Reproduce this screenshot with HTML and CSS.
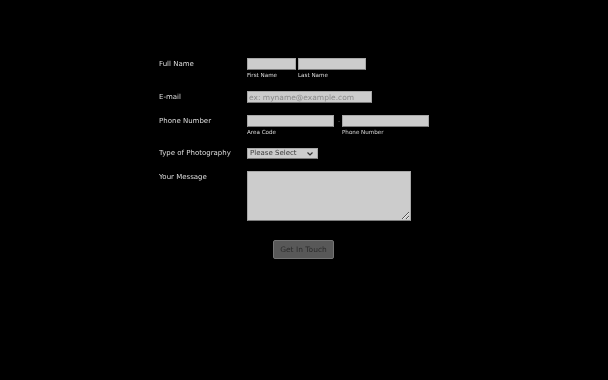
FILE: index.html
```html
<!DOCTYPE html>
<html>
<head>
<meta charset="utf-8">
<link rel="stylesheet" href="styles.css">
</head>
<body>
<form class="form">
  <div class="row">
    <label class="label">Full Name</label>
    <div class="field">
      <div class="group">
        <input class="input w-first" type="text">
        <span class="sub">First Name</span>
      </div>
      <div class="group">
        <input class="input w-last" type="text">
        <span class="sub">Last Name</span>
      </div>
    </div>
  </div>
  <div class="row">
    <label class="label">E-mail</label>
    <div class="field">
      <input class="input w-email" type="text" placeholder="ex: myname@example.com">
    </div>
  </div>
  <div class="row">
    <label class="label">Phone Number</label>
    <div class="field">
      <div class="group">
        <input class="input w-area" type="text">
        <span class="sub">Area Code</span>
      </div>
      <span class="dash">-</span>
      <div class="group">
        <input class="input w-phone" type="text">
        <span class="sub">Phone Number</span>
      </div>
    </div>
  </div>
  <div class="row row-tight">
    <label class="label label-tight">Type of Photography</label>
    <div class="field">
      <div class="select">
        <span class="select-text">Please Select</span>
        <svg class="chev" width="6" height="4" viewBox="0 0 6 4"><path d="M0.5 0.5 L3 3 L5.5 0.5" fill="none" stroke="#333" stroke-width="1.2"/></svg>
      </div>
    </div>
  </div>
  <div class="row">
    <label class="label">Your Message</label>
    <div class="field">
      <textarea class="textarea"></textarea>
    </div>
  </div>
  <div class="actions">
    <button class="button" type="button">Get In Touch</button>
  </div>
</form>
</body>
</html>
```
FILE: styles.css
```css
html, body {
  margin: 0;
  padding: 0;
  background: #000;
}
body {
  width: 608px;
  height: 380px;
  overflow: hidden;
  font-family: "DejaVu Sans", Verdana, sans-serif;
}
.form {
  padding: 58px 0 0 159px;
  filter: grayscale(1);
}
.row {
  display: flex;
  align-items: flex-start;
  margin-bottom: 12px;
}
.label {
  width: 88px;
  height: 12px;
  flex: none;
  color: #dedede;
  font-size: 7px;
  line-height: 12px;
  white-space: nowrap;
}
.label-tight {
  height: 11px;
  line-height: 11px;
}
.field {
  display: flex;
  align-items: flex-start;
}
.group {
  display: flex;
  flex-direction: column;
  margin-right: 2px;
}
.input {
  box-sizing: border-box;
  height: 12px;
  margin: 0;
  padding: 0 1px;
  background: #cccccc;
  border: 1px solid #a8a8a8;
  border-bottom-color: #7a7a7a;
  border-radius: 0;
  font-family: "DejaVu Sans", Verdana, sans-serif;
  font-size: 7.5px;
  color: #333;
  outline: none;
  flex: none;
}
.input::placeholder {
  color: #8a8a8a;
}
.w-first { width: 49px; }
.w-last { width: 68px; }
.w-email { width: 125px; }
.w-area { width: 87px; }
.w-phone { width: 87px; }
.sub {
  display: block;
  height: 9px;
  color: #dedede;
  font-size: 5.6px;
  line-height: 11px;
  white-space: nowrap;
  overflow: visible;
}
.dash {
  color: #666;
  font-size: 6px;
  line-height: 12px;
  height: 12px;
  width: 6px;
  text-align: center;
}
.select {
  position: relative;
  box-sizing: border-box;
  width: 71px;
  height: 11px;
  background: #cccccc;
  border: 1px solid #a8a8a8;
  border-bottom-color: #7a7a7a;
  display: flex;
  align-items: center;
  padding-left: 2px;
}
.select-text {
  font-size: 7px;
  color: #3a3a3a;
  line-height: 9px;
}
.chev {
  position: absolute;
  right: 4px;
  top: 3px;
}
.textarea {
  box-sizing: border-box;
  width: 164px;
  height: 50px;
  margin: 0;
  padding: 1px;
  background: #cccccc;
  border: 1px solid #a8a8a8;
  border-bottom-color: #7a7a7a;
  border-radius: 0;
  outline: none;
  display: block;
  resize: both;
}
.actions {
  display: flex;
  padding-left: 114px;
  padding-top: 7px;
}
.button {
  box-sizing: border-box;
  width: 61px;
  height: 19px;
  margin: 0;
  padding: 0;
  background: #585858;
  border: 1px solid #747474;
  border-radius: 2px;
  color: #2c2c2c;
  font-family: "DejaVu Sans", Verdana, sans-serif;
  font-size: 7.5px;
}
```
